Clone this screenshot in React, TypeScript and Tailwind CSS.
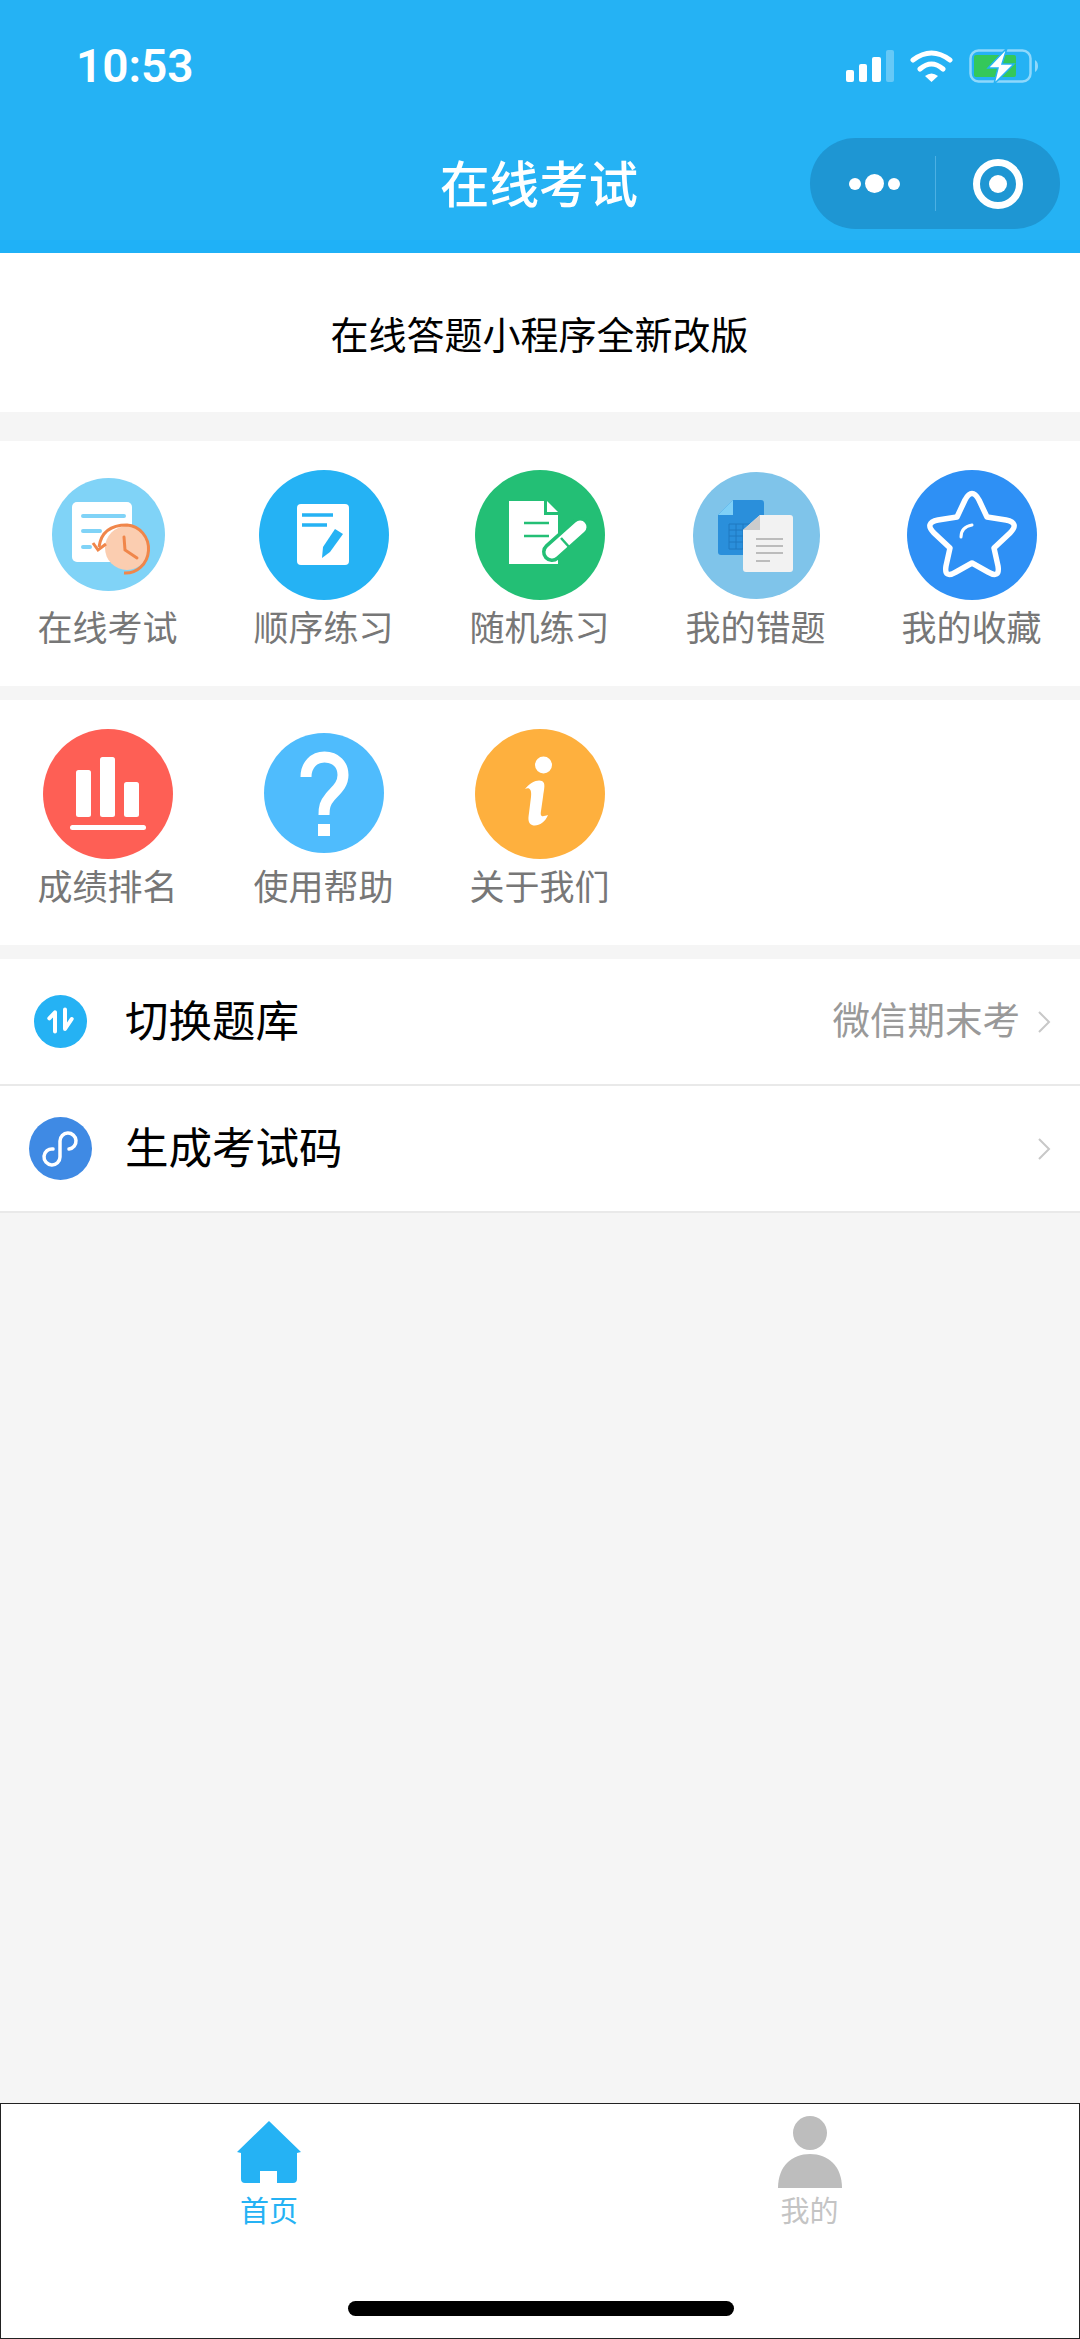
import type { ReactNode } from 'react';

const CircleIcon = ({ size, color, className, children }: { size: number; color: string; className?: string; children: ReactNode }) => (
  <svg width={size} height={size} viewBox={`0 0 ${size} ${size}`} className={className} aria-hidden="true">
    <circle cx={size / 2} cy={size / 2} r={size / 2} fill={color} />
    {children}
  </svg>
);

const ExamIcon = () => (
  <CircleIcon size={113} color="#80d3f7" className="mb-[2px]">
    <rect x="20" y="24" width="60" height="60" rx="5" fill="#fff" />
    <path d="M31 38H72M31 53H48M31 69H38" stroke="#80d3f7" strokeWidth="4" strokeLinecap="round" />
    <circle cx="75" cy="70" r="22" fill="#fbcdb0" />
    <path d="M47 69Q50 47 75 47A23 24 0 0 1 72 95" fill="none" stroke="#f0864a" strokeWidth="3" />
    <path d="M41 65L46 72L54 66" fill="none" stroke="#f0864a" strokeWidth="3" />
    <path d="M72 59L73 72L85 80" fill="none" stroke="#f0864a" strokeWidth="3" strokeLinecap="round" />
  </CircleIcon>
);

const OrderIcon = () => (
  <CircleIcon size={130} color="#25b2f4">
    <rect x="38" y="34" width="52" height="61" rx="4" fill="#fff" />
    <path d="M43 45H74M43 55H68" stroke="#25b2f4" strokeWidth="3.5" />
    <path d="M63 88L64 77L76 59L84 64L71 82Z" fill="#25b2f4" />
  </CircleIcon>
);

const RandomIcon = () => (
  <CircleIcon size={130} color="#23bf75">
    <path d="M34 31H69V45H83V94H34Z" fill="#fff" />
    <path d="M72 31L83 42H72Z" fill="#fff" />
    <path d="M49 53H74M49 66H74" stroke="#23bf75" strokeWidth="2.5" />
    <path d="M77 82L105 57" stroke="#23bf75" strokeWidth="20" strokeLinecap="round" />
    <path d="M77 82L105 57" stroke="#fff" strokeWidth="13" strokeLinecap="round" />
    <path d="M86 68L95 78" stroke="#23bf75" strokeWidth="2.5" />
  </CircleIcon>
);

const WrongIcon = () => (
  <CircleIcon size={127} color="#7fc4ea">
    <path d="M40 28H68Q71 28 71 31V83H28Q25 83 25 80V43Z" fill="#2a8fdb" />
    <path d="M40 28V43H25Z" fill="#7fd0f7" />
    <path d="M36 52H57V77H36ZM36 58H57M36 64H57M36 70H57M43 52V77M50 52V77" fill="none" stroke="#1f78c0" strokeWidth="1" />
    <path d="M67 43H97Q100 43 100 46V97Q100 100 97 100H53Q50 100 50 97V58Z" fill="#f2f2f2" />
    <path d="M67 43V58H50Z" fill="#cccccc" />
    <path d="M63 67H90M63 74H90M63 81H90M63 89H77" stroke="#aaaaaa" strokeWidth="1.5" />
  </CircleIcon>
);

const StarIcon = () => (
  <CircleIcon size={130} color="#2e90f5">
    <path
      d="M58 30Q65 17 72 30L80 47L99 50Q113 53 103 63L87 78L91 96Q93 109 81 102L65 93L49 102Q37 109 39 96L43 78L27 63Q17 53 31 50L50 47Z"
      fill="none"
      stroke="#fff"
      strokeWidth="5.5"
      strokeLinejoin="round"
    />
    <path d="M54 67Q54 57 65 55" fill="none" stroke="#fff" strokeWidth="3" strokeLinecap="round" />
  </CircleIcon>
);

const RankIcon = () => (
  <CircleIcon size={130} color="#fe5f55">
    <rect x="33" y="41" width="15" height="47" rx="2.5" fill="#fff" />
    <rect x="57" y="28" width="15" height="60" rx="2.5" fill="#fff" />
    <rect x="81" y="53" width="15" height="35" rx="2.5" fill="#fff" />
    <rect x="27" y="96" width="76" height="5" rx="2.5" fill="#fff" />
  </CircleIcon>
);

const HelpIcon = () => (
  <CircleIcon size={120} color="#4fbcfd" className="mb-[3px]">
    <path
      d="M42 44C42 32 50 24 60.5 24C72 24 79 32 79 42C79 52 72 57 66 64C61 70 60 74 60 82"
      fill="none"
      stroke="#fff"
      strokeWidth="11"
    />
    <rect x="54" y="91" width="12" height="12" fill="#fff" />
  </CircleIcon>
);

const InfoIcon = () => (
  <CircleIcon size={130} color="#feb03e">
    <circle cx="68.5" cy="36" r="8.5" fill="#fff" />
    <path
      d="M50 60C55 53 63 50 67 52C71 54 69 60 68 68L66 82C65 88 67 88 73 86C70 94 62 98 57 96C53 94 53 90 54 84L56 68C57 60 54 58 50 60Z"
      fill="#fff"
    />
  </CircleIcon>
);

const SwitchIcon = () => (
  <CircleIcon size={53} color="#25b2f4">
    <path d="M15.3 23.3L21 17.3V36.6M31 14.6V34L37.7 24" fill="none" stroke="#fff" strokeWidth="4" strokeLinecap="round" strokeLinejoin="round" />
  </CircleIcon>
);

const CodeIcon = () => (
  <CircleIcon size={63} color="#3f8ae4">
    <path d="M24 32A8 8 0 1 0 31 40V24A8 8 0 1 1 40 32" fill="none" stroke="#fff" strokeWidth="3.5" strokeLinecap="round" />
  </CircleIcon>
);

const Chevron = () => (
  <svg width="14" height="22" viewBox="0 0 14 22" aria-hidden="true">
    <path d="M2 1L12 11L2 21" fill="none" stroke="#c8c8c8" strokeWidth="2" />
  </svg>
);

const row1 = [
  { label: '在线考试', icon: <ExamIcon /> },
  { label: '顺序练习', icon: <OrderIcon /> },
  { label: '随机练习', icon: <RandomIcon /> },
  { label: '我的错题', icon: <WrongIcon /> },
  { label: '我的收藏', icon: <StarIcon /> },
];

const row2 = [
  { label: '成绩排名', icon: <RankIcon /> },
  { label: '使用帮助', icon: <HelpIcon /> },
  { label: '关于我们', icon: <InfoIcon /> },
];

function IconGrid({ items }: { items: { label: string; icon: ReactNode }[] }) {
  return (
    <div className="grid h-[245px] grid-cols-5 bg-white pt-[29px]">
      {items.map((item) => (
        <div key={item.label} className="flex flex-col items-center">
          <div className="flex h-[130px] items-center justify-center">{item.icon}</div>
          <span className="pr-[1px] text-[35px] leading-[52px] text-[#777777]">{item.label}</span>
        </div>
      ))}
    </div>
  );
}

function StatusIcons() {
  return (
    <div className="flex items-center gap-[16px]">
      <svg width="48" height="32" viewBox="0 0 48 32" aria-hidden="true">
        <rect x="0" y="20" width="8" height="12" rx="2" fill="#fff" />
        <rect x="13" y="14" width="8" height="18" rx="2" fill="#fff" />
        <rect x="26" y="7" width="9" height="25" rx="2" fill="#fff" />
        <rect x="40" y="0" width="8" height="32" rx="2" fill="#fff" fillOpacity="0.3" />
      </svg>
      <svg width="43" height="32" viewBox="0 0 43 32" aria-hidden="true">
        <path d="M3 10Q21.5 -4 40 10M10 19Q21.5 9 33 19" fill="none" stroke="#fff" strokeWidth="5" strokeLinecap="round" />
        <path d="M15 26Q21.5 21 28 26L21.5 32Z" fill="#fff" />
      </svg>
      <svg width="69" height="36" viewBox="0 -2 69 36" aria-hidden="true">
        <rect x="1.5" y="0.5" width="60" height="31" rx="8" fill="none" stroke="#8fd8fb" strokeWidth="2.5" />
        <rect x="5" y="5" width="42" height="22" rx="2" fill="#34c85a" />
        <path d="M66 10Q69 12 69 16Q69 20 66 22Z" fill="#8fd8fb" />
        <path d="M38 -2L19 18H29L25 34L45 14H33Z" fill="#fff" stroke="#25b2f4" strokeWidth="1.5" />
      </svg>
    </div>
  );
}

export default function App() {
  return (
    <div className="flex h-[2339px] w-[1080px] flex-col overflow-hidden bg-[#f5f5f5] font-['Noto_Sans_CJK_SC',sans-serif]">
      <header className="h-[253px] bg-[#25b2f4] text-white">
        <div className="flex h-[32px] translate-y-[50px] items-center justify-between pl-[76px] pr-[42px]">
          <span className="font-['Roboto',sans-serif] text-[46px] leading-none font-semibold">10:53</span>
          <StatusIcons />
        </div>
        <div className="relative mt-[106px] flex h-[91px] items-center justify-center">
          <span className="-translate-y-[2px] pr-[2px] text-[49.5px] leading-none font-medium">在线考试</span>
          <div className="absolute right-[20px] top-0 flex h-[91px] w-[250px] items-center rounded-full bg-[#1e96d3]">
            <div className="flex w-[125px] items-center justify-center gap-[4px] pl-[4px]">
              <span className="size-[12px] rounded-full bg-white" />
              <span className="size-[19px] rounded-full bg-white" />
              <span className="size-[12px] rounded-full bg-white" />
            </div>
            <div className="h-[55px] w-px bg-[#4cb0e3]" />
            <div className="flex flex-1 items-center justify-center">
              <div className="flex size-[50px] items-center justify-center rounded-full border-[7px] border-white">
                <span className="size-[18px] rounded-full bg-white" />
              </div>
            </div>
          </div>
        </div>
        <div className="mt-[11px] h-[13px] bg-[#1fb1f7]" />
      </header>

      <div className="flex h-[159px] items-center justify-center bg-white pr-[1px] text-[38px] text-black">在线答题小程序全新改版</div>

      <div className="mt-[29px]">
        <IconGrid items={row1} />
      </div>
      <div className="mt-[14px]">
        <IconGrid items={row2} />
      </div>

      <div className="mt-[14px]">
        <div className="flex h-[127px] items-center border-b-2 border-[#e9e9e9] bg-white pr-[29px]">
          <div className="flex w-[125px] justify-center pr-[5px]">
            <SwitchIcon />
          </div>
          <span className="flex-1 -translate-y-[3px] text-[43.5px] text-black">切换题库</span>
          <span className="mr-[17px] -translate-y-[3px] text-[37.5px] text-[#999999]">微信期末考</span>
          <Chevron />
        </div>
        <div className="flex h-[127px] items-center border-b-2 border-[#e9e9e9] bg-white pr-[29px]">
          <div className="flex w-[125px] justify-center pr-[5px]">
            <CodeIcon />
          </div>
          <span className="flex-1 -translate-y-[3px] text-[43.5px] text-black">生成考试码</span>
          <Chevron />
        </div>
      </div>

      <footer className="relative mt-auto grid h-[236px] grid-cols-2 border border-[#222222] bg-white">
        <div className="flex flex-col items-center pr-[3px] pt-[17px]">
          <svg width="64" height="68" viewBox="0 0 64 68" aria-hidden="true">
            <path
              d="M32 0L64 31L60 32V58Q60 62 56 62H40V50H23V62H8Q4 62 4 58V32L0 31Z"
              fill="#25b2f4"
            />
          </svg>
          <span className="text-[29px] leading-[40px] text-[#25b2f4]">首页</span>
        </div>
        <div className="flex flex-col items-center pt-[12px]">
          <svg width="64" height="73" viewBox="0 0 64 73" aria-hidden="true">
            <circle cx="32" cy="17" r="17" fill="#bdbdbd" />
            <path d="M0 72C0 50 14 38 32 38C50 38 64 50 64 72Z" fill="#bdbdbd" />
          </svg>
          <span className="text-[29px] leading-[40px] text-[#c4c4c4]">我的</span>
        </div>
        <div className="absolute bottom-[22px] left-[347px] h-[15px] w-[386px] rounded-full bg-black" />
      </footer>
    </div>
  );
}
